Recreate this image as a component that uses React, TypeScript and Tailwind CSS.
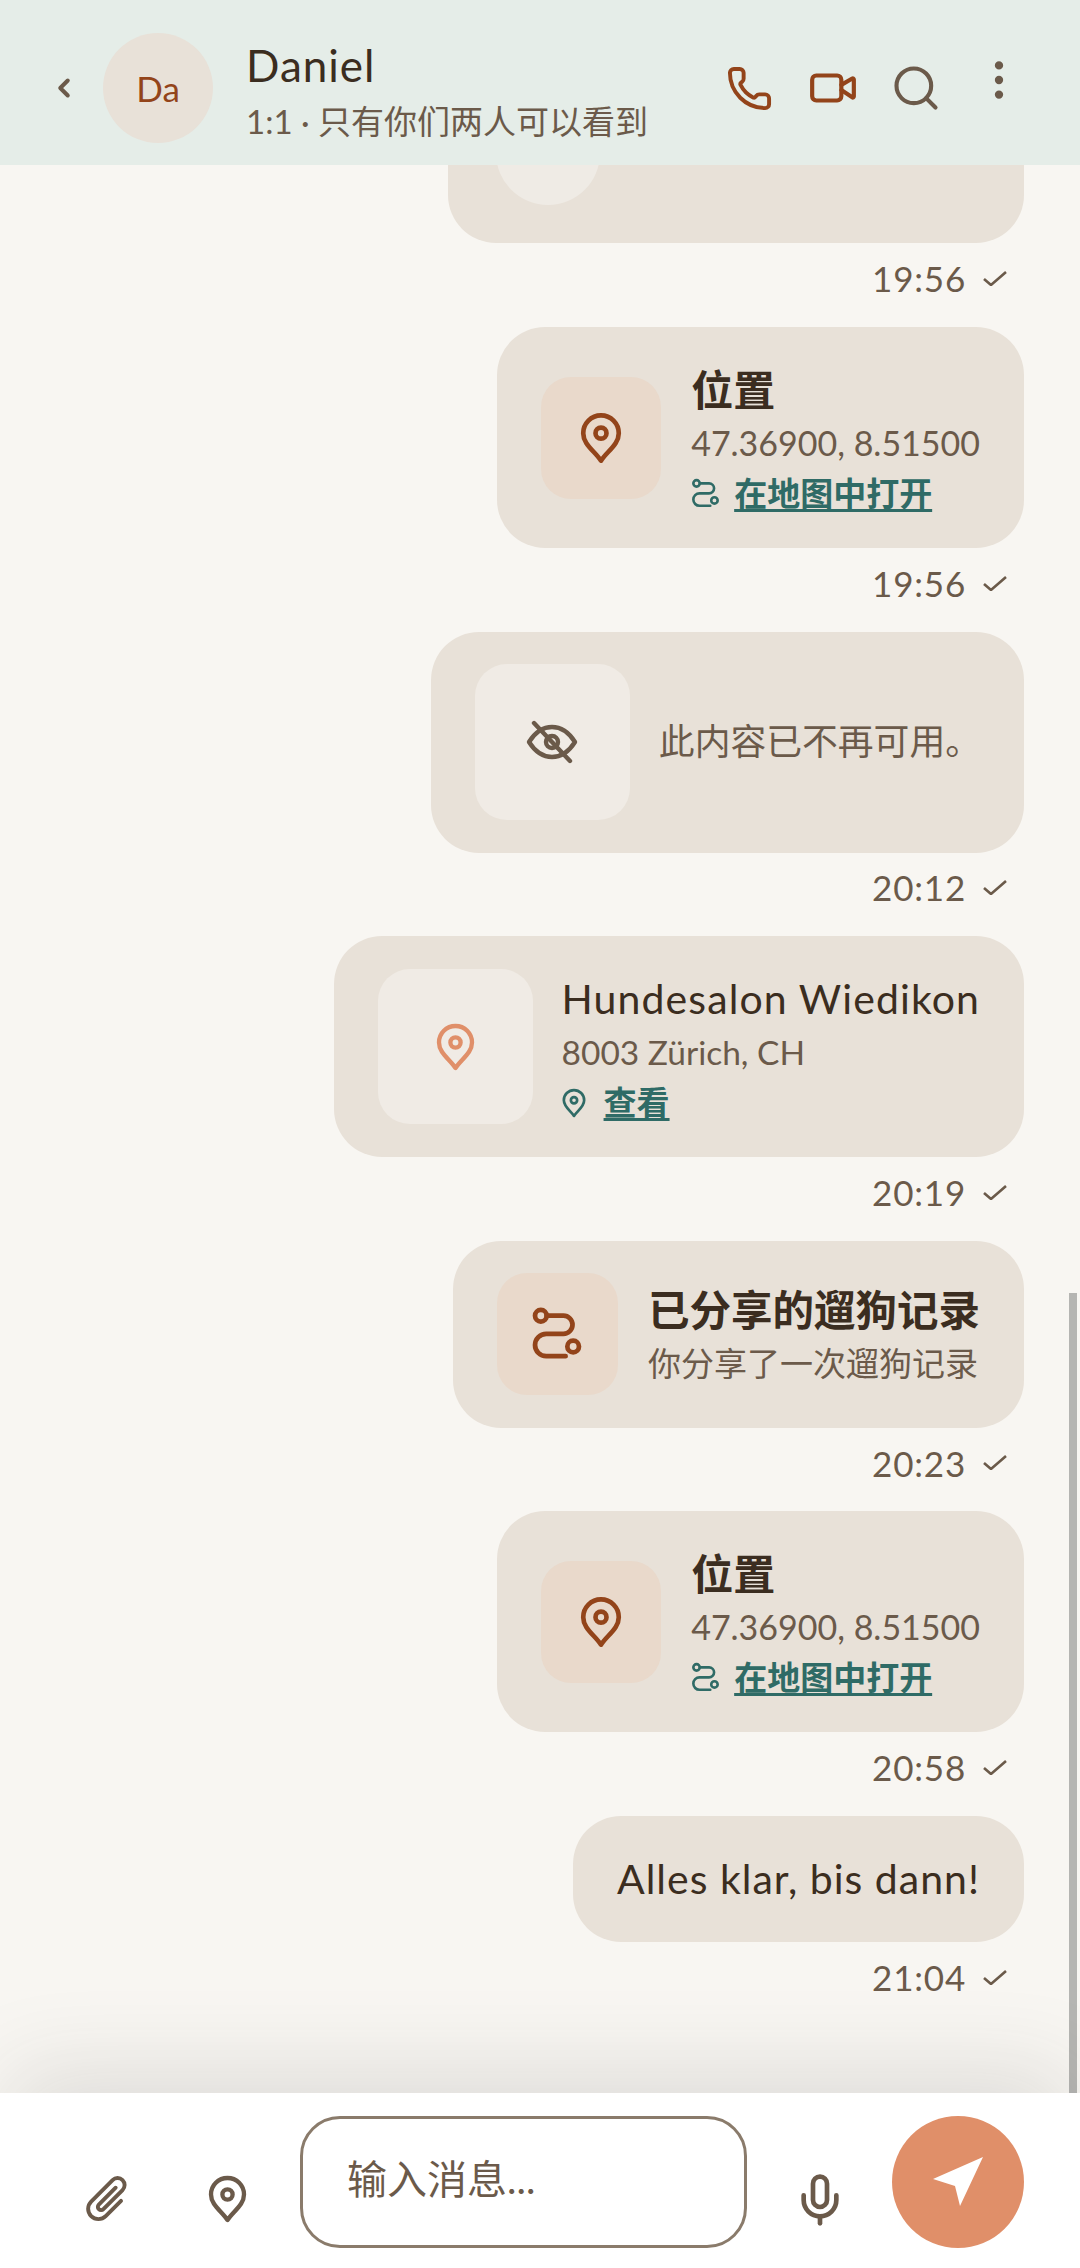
import { ChevronLeft, EllipsisVertical, Mic, Phone, Search, Video } from "lucide-react";
import type { ReactNode } from "react";

const font = { fontFamily: 'Lato, "Noto Sans CJK SC", sans-serif' };

function Pin({ className }: { className: string }) {
  return (
    <svg viewBox="0 0 26 32" fill="none" stroke="currentColor" strokeWidth="2.9" strokeLinejoin="round" className={className}>
      <path d="M13 30 C9 24 2 20 2 13 A11 11 0 0 1 24 13 C24 20 17 24 13 30Z" />
      <circle cx="13" cy="13" r="3.4" />
    </svg>
  );
}

function RouteIcon({ className }: { className: string }) {
  return (
    <svg viewBox="0 0 24 26" fill="none" stroke="currentColor" strokeWidth="2.2" strokeLinecap="round" className={className}>
      <circle cx="4.5" cy="4.5" r="2.7" />
      <path d="M7.2 4.5 H15 a4.2 4.2 0 0 1 0 8.4 H7 a5.2 5.2 0 0 0 0 10.4 H16" />
      <circle cx="19.5" cy="18.8" r="2.7" />
    </svg>
  );
}

function EyeSlash({ className }: { className: string }) {
  return (
    <svg viewBox="0 0 52 44" fill="none" stroke="currentColor" strokeWidth="4.4" strokeLinecap="round" strokeLinejoin="round" className={className}>
      <path d="M3 22 C10 11 18 7 26 7 S42 11 49 22 C42 33 34 37 26 37 S10 33 3 22Z" />
      <circle cx="26" cy="22" r="6" />
      <path d="M8 3 L44 41" />
    </svg>
  );
}

function Clip({ className }: { className: string }) {
  return (
    <svg viewBox="0 0 48 48" fill="none" stroke="currentColor" strokeWidth="3.6" strokeLinecap="round" className={className}>
      <g transform="translate(24 24) rotate(45) translate(-10 -25)">
        <path d="M19 17 V37 A9.5 9.5 0 0 1 0 37 V9 A6.5 6.5 0 0 1 13 9 V34 A3 3 0 0 1 7 34 V12" />
      </g>
    </svg>
  );
}

function Meta({ time }: { time: string }) {
  return (
    <div className="mt-[15px] mb-[28.6px] flex h-[40px] shrink-0 items-center justify-end gap-[17px] pr-[17px] text-[35px] tracking-[0.8px] text-[#6b5a4a]">
      <span>{time}</span>
      <svg viewBox="0 0 24 15" fill="none" stroke="currentColor" strokeWidth="2.6" className="h-[15px] w-[24px]">
        <polyline points="1,8 8,14 23,1" />
      </svg>
    </div>
  );
}

function Bubble({ className, children }: { className: string; children: ReactNode }) {
  return <div className={`flex shrink-0 items-center self-end rounded-[48px] bg-[#e8e1d8] ${className}`}>{children}</div>;
}

function LocationCard() {
  return (
    <Bubble className="h-[221px] gap-[30px] pr-[44px] pl-[44px]">
      <div className="flex h-[122px] w-[120px] items-center justify-center rounded-[30px] bg-[#e9d9cb]">
        <Pin className="h-[52px] w-[42px] text-[#93441a]" />
      </div>
      <div className="pt-[6px]">
        <div className="text-[42px] leading-[56px] font-bold text-[#3b2d20]">位置</div>
        <div className="text-[34px] leading-[50px] text-[#6b5a4a]">47.36900, 8.51500</div>
        <div className="flex h-[52px] items-center gap-[14px] text-[33px] font-bold text-[#2f6b66]">
          <RouteIcon className="h-[31px] w-[29px]" />
          <span className="underline decoration-[3px] underline-offset-[3px]">在地图中打开</span>
        </div>
      </div>
    </Bubble>
  );
}

export default function App() {
  return (
    <div className="relative flex h-[2268px] w-[1080px] flex-col overflow-hidden bg-[#f8f6f2]" style={font}>
      <header className="z-20 flex h-[165px] shrink-0 items-center bg-[#e5ede8] pt-[11px] pr-[56px] pl-[46px]">
        <ChevronLeft className="h-[30px] w-[36px] text-[#6b5a4a]" strokeWidth={3.2} />
        <div className="ml-[21px] flex h-[110px] w-[110px] items-center justify-center rounded-full bg-[#e8e1d8] text-[35px] text-[#93441a]">
          Da
        </div>
        <div className="ml-[33px] flex-1 pt-[6px]">
          <div className="text-[44px] leading-[60px] tracking-[1px] text-[#3b2d20]">Daniel</div>
          <div className="text-[33px] leading-[52px] text-[#6b5a4a]">1:1 · 只有你们两人可以看到</div>
        </div>
        <Phone className="h-[47px] w-[47px] text-[#93441a]" strokeWidth={2} />
        <Video className="ml-[35px] h-[50px] w-[50px] text-[#93441a]" strokeWidth={2} />
        <Search className="ml-[32px] h-[52px] w-[52px] text-[#6b5a4a]" strokeWidth={1.9} />
        <EllipsisVertical className="-mt-[16px] ml-[32px] h-[50px] w-[50px] text-[#6b5a4a]" strokeWidth={2} />
      </header>

      <main className="flex min-h-0 flex-1 flex-col justify-end overflow-hidden pr-[56px] pb-[67.4px]">
        <Bubble className="h-[221px] w-[576px] items-start pl-[48px]">
          <div className="mt-[79px] h-[104px] w-[104px] rounded-full bg-[#efebe5]" />
        </Bubble>
        <Meta time="19:56" />

        <LocationCard />
        <Meta time="19:56" />

        <Bubble className="h-[221px] gap-[29px] pr-[43px] pl-[44px]">
          <div className="flex h-[156px] w-[155px] items-center justify-center rounded-[32px] bg-[#f0ebe5]">
            <EyeSlash className="h-[44px] w-[52px] text-[#6b5a4a]" />
          </div>
          <div className="text-[35.8px] text-[#6b5a4a]">此内容已不再可用。</div>
        </Bubble>
        <Meta time="20:12" />

        <Bubble className="h-[221px] gap-[29px] pr-[44px] pl-[44px]">
          <div className="flex h-[155px] w-[155px] items-center justify-center rounded-[32px] bg-[#f0ebe5]">
            <Pin className="h-[48px] w-[39px] text-[#e08f69]" />
          </div>
          <div className="pt-[6px]">
            <div className="text-[41px] leading-[56px] tracking-[1.1px] text-[#3b2d20]">Hundesalon Wiedikon</div>
            <div className="text-[33.5px] leading-[50px] text-[#6b5a4a]">8003 Zürich, CH</div>
            <div className="flex h-[52px] items-center gap-[18px] text-[33px] font-bold text-[#2f6b66]">
              <Pin className="h-[30px] w-[24px]" />
              <span className="underline decoration-[3px] underline-offset-[3px]">查看</span>
            </div>
          </div>
        </Bubble>
        <Meta time="20:19" />

        <Bubble className="h-[187px] gap-[30px] pr-[44px] pl-[44px]">
          <div className="flex h-[122px] w-[121px] items-center justify-center rounded-[30px] bg-[#e9d9cb]">
            <RouteIcon className="h-[56px] w-[52px] text-[#93441a]" />
          </div>
          <div className="pt-[2px]">
            <div className="text-[41.5px] leading-[56px] font-bold text-[#3b2d20]">已分享的遛狗记录</div>
            <div className="text-[33px] leading-[50px] text-[#6b5a4a]">你分享了一次遛狗记录</div>
          </div>
        </Bubble>
        <Meta time="20:23" />

        <LocationCard />
        <Meta time="20:58" />

        <Bubble className="h-[126px] px-[44px] text-[41px] tracking-[1px] text-[#3b2d20]">Alles klar, bis dann!</Bubble>
        <Meta time="21:04" />
      </main>

      <div className="absolute top-[1293px] right-[3px] z-10 h-[800px] w-[8px] bg-[#b5b5b2]" />

      <footer className="z-20 flex h-[175px] shrink-0 items-start bg-white pt-[23px] pr-[56px] pl-[82px] shadow-[0_-30px_90px_-10px_rgba(50,50,45,0.13)]">
        <div className="flex h-[132px] items-end pb-[22px]">
          <Clip className="h-[52px] w-[52px] text-[#6b5a4a]" />
        </div>
        <div className="flex h-[132px] items-end pb-[25px] pl-[74px]">
          <Pin className="h-[48px] w-[39px] text-[#6b5a4a]" />
        </div>
        <div className="ml-[53px] flex h-[132px] w-[447px] shrink-0 items-center rounded-[40px] border-[3px] border-[#8a7b6b] pb-[6px] pl-[44px] text-[40px] text-[#6b5a4a]">
          输入消息...
        </div>
        <div className="flex h-[132px] items-end pb-[20px] pl-[45px]">
          <Mic className="h-[56px] w-[56px] text-[#6b5a4a]" strokeWidth={2} />
        </div>
        <div className="ml-[44px] flex h-[132px] w-[132px] shrink-0 items-center justify-center rounded-full bg-[#e08f69]">
          <svg viewBox="0 0 50 50" className="h-[50px] w-[50px] fill-white">
            <polygon points="50,0 0,22 22,29 27,49" />
          </svg>
        </div>
      </footer>
    </div>
  );
}
